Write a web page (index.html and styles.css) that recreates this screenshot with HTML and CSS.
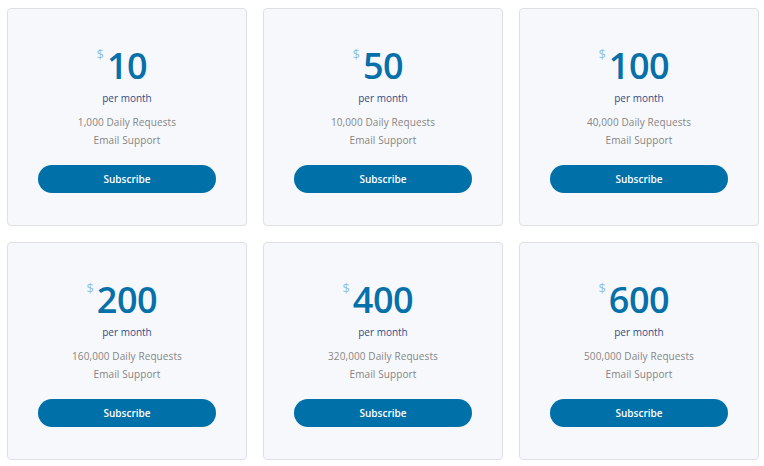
FILE: index.html
```html
<!DOCTYPE html>
<html>
<head>
<meta charset="utf-8">
<link rel="stylesheet" href="styles.css">
</head>
<body>
<div class="grid">
  <div class="card">
    <div class="price"><span class="amt"><span class="cur">$</span>10</span></div>
    <div class="per">per month</div>
    <ul class="feat"><li>1,000 Daily Requests</li><li>Email Support</li></ul>
    <button class="btn">Subscribe</button>
  </div>
  <div class="card">
    <div class="price"><span class="amt"><span class="cur">$</span>50</span></div>
    <div class="per">per month</div>
    <ul class="feat"><li>10,000 Daily Requests</li><li>Email Support</li></ul>
    <button class="btn">Subscribe</button>
  </div>
  <div class="card">
    <div class="price"><span class="amt"><span class="cur">$</span>100</span></div>
    <div class="per">per month</div>
    <ul class="feat"><li>40,000 Daily Requests</li><li>Email Support</li></ul>
    <button class="btn">Subscribe</button>
  </div>
  <div class="card">
    <div class="price"><span class="amt"><span class="cur">$</span>200</span></div>
    <div class="per">per month</div>
    <ul class="feat"><li>160,000 Daily Requests</li><li>Email Support</li></ul>
    <button class="btn">Subscribe</button>
  </div>
  <div class="card">
    <div class="price"><span class="amt"><span class="cur">$</span>400</span></div>
    <div class="per">per month</div>
    <ul class="feat"><li>320,000 Daily Requests</li><li>Email Support</li></ul>
    <button class="btn">Subscribe</button>
  </div>
  <div class="card">
    <div class="price"><span class="amt"><span class="cur">$</span>600</span></div>
    <div class="per">per month</div>
    <ul class="feat"><li>500,000 Daily Requests</li><li>Email Support</li></ul>
    <button class="btn">Subscribe</button>
  </div>
</div>
</body>
</html>
```
FILE: styles.css
```css
html, body {
  margin: 0;
  padding: 0;
  background: #ffffff;
  font-family: "Open Sans", "Noto Sans", sans-serif;
}
.grid {
  display: grid;
  grid-template-columns: repeat(3, 240px);
  grid-auto-rows: 218px;
  gap: 16px;
  padding: 8px 0 0 7px;
}
.card {
  box-sizing: border-box;
  background: #f7f8fc;
  border: 1px solid #dfe0e4;
  border-radius: 4px;
  display: flex;
  flex-direction: column;
  align-items: center;
  padding: 36px 30px 0;
}
.price {
  display: flex;
  justify-content: center;
  height: 42px;
}
.amt {
  position: relative;
  display: inline-block;
  color: #0570a9;
  font-size: 36px;
  font-weight: 600;
  line-height: 42px;
  letter-spacing: -0.5px;
}
.cur {
  position: absolute;
  right: calc(100% + 3px);
  top: 3px;
  color: #8ec1de;
  font-size: 13px;
  font-weight: 400;
  line-height: 13px;
  letter-spacing: 0;
}
.per {
  color: #2f4f8a;
  font-size: 10px;
  line-height: 14px;
  margin-top: 4px;
}
.feat {
  list-style: none;
  margin: 8px 0 0;
  padding: 0;
  text-align: center;
  color: #858585;
  font-size: 10px;
  line-height: 18px;
  letter-spacing: 0.1px;
}
.btn {
  margin-top: 16px;
  width: 100%;
  height: 28px;
  border: none;
  border-radius: 14px;
  background: #0070a9;
  color: #ffffff;
  font-family: "Open Sans", "Noto Sans", sans-serif;
  font-size: 10px;
  font-weight: 600;
  padding: 0;
}
```
